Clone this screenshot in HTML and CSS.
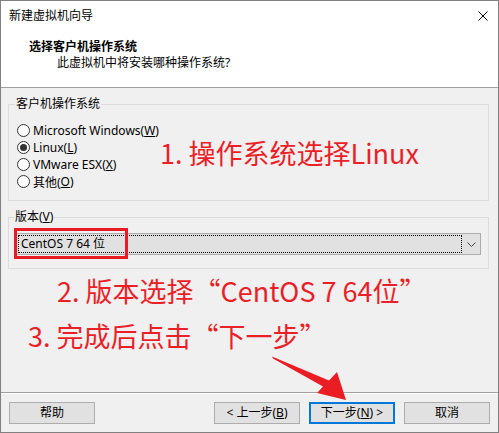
FILE: index.html
```html
<!DOCTYPE html>
<html lang="zh-CN">
<head>
<meta charset="utf-8">
<title>新建虚拟机向导</title>
<link rel="stylesheet" href="styles.css">
</head>
<body>
<div class="window">
  <div class="titlebar">
    <span class="title">新建虚拟机向导</span>
    <svg class="close" viewBox="0 0 10 10" width="10" height="10"><path d="M0.5 0.5 L9.5 9.5 M9.5 0.5 L0.5 9.5" stroke="#000" stroke-width="1" fill="none"/></svg>
  </div>
  <div class="header">
    <div class="h-title">选择客户机操作系统</div>
    <div class="h-sub">此虚拟机中将安装哪种操作系统?</div>
  </div>
  <div class="content">
    <fieldset class="group os">
      <legend>客户机操作系统</legend>
      <div class="os-row">
        <div class="radios">
          <div class="radio"><span class="dot"></span>Microsoft Windows(<u>W</u>)</div>
          <div class="radio"><span class="dot checked"></span>Linux(<u>L</u>)</div>
          <div class="radio"><span class="dot"></span>VMware ESX(<u>X</u>)</div>
          <div class="radio"><span class="dot"></span>其他(<u>O</u>)</div>
        </div>
        <div class="note note1">1. 操作系统选择Linux</div>
      </div>
    </fieldset>
    <fieldset class="group ver">
      <legend>版本(<u>V</u>)</legend>
      <div class="combo">
        <div class="combo-field">CentOS 7 64 位</div>
        <div class="combo-btn"><svg viewBox="0 0 9 5" width="9" height="5"><path d="M0.5 0.5 L4.5 4.5 L8.5 0.5" stroke="#444" stroke-width="1" fill="none"/></svg></div>
        <div class="mark"></div>
      </div>
    </fieldset>
    <div class="note note2">2. 版本选择“CentOS 7 64位”</div>
    <div class="note note3">3. 完成后点击“下一步”</div>
  </div>
  <div class="footer">
    <button class="btn">帮助</button>
    <div class="nav">
      <button class="btn">&lt; 上一步(<u>B</u>)</button>
      <button class="btn primary">下一步(<u>N</u>) &gt;</button>
      <button class="btn">取消</button>
    </div>
  </div>
  <svg class="arrow" viewBox="0 0 499 433" width="499" height="433">
    <polygon points="272,356.5 329,380.5 337,372 346,400 317,393 323,386.5 273,358.5" fill="#ea1c24"/>
  </svg>
</div>
</body>
</html>
```

FILE: styles.css
```css
* {
  box-sizing: border-box;
}

html,
body {
  margin: 0;
  padding: 0;
}

body {
  width: 499px;
  height: 433px;
  overflow: hidden;
  background: #ffffff;
  font-family: "Noto Sans", "Noto Sans CJK SC", sans-serif;
  font-size: 12px;
  color: #000000;
}

.window {
  position: relative;
  width: 499px;
  height: 433px;
  border: 1px solid #808080;
  display: flex;
  flex-direction: column;
  background: #f0f0f0;
}

.titlebar {
  height: 29px;
  flex: none;
  background: #ffffff;
  display: flex;
  align-items: center;
  justify-content: space-between;
  padding: 0 10px 0 8px;
  line-height: 16px;
}

.close {
  display: block;
}

.header {
  height: 58px;
  flex: none;
  background: #ffffff;
  border-bottom: 1px solid #a0a0a0;
  padding: 9px 0 0 28px;
  line-height: 16px;
}

.h-title {
  font-weight: bold;
}

.h-sub {
  padding-left: 28px;
}

.content {
  flex: 1;
  padding: 8px 9px 0 7px;
  display: flex;
  flex-direction: column;
}

.group {
  margin: 0;
  border: 1px solid #dcdcdc;
  min-width: 0;
}

.group legend {
  padding: 0 1px;
  margin-left: -2px;
  line-height: 16px;
}

.os {
  padding: 10px 8px 10px 8px;
}

.os-row {
  display: flex;
  align-items: flex-start;
}

.radios {
  width: 143px;
  flex: none;
}

.radio {
  display: flex;
  align-items: center;
  height: 17px;
  white-space: nowrap;
}

.dot {
  position: relative;
  width: 13px;
  height: 13px;
  flex: none;
  border: 1px solid #333333;
  border-radius: 50%;
  background: #ffffff;
  margin-right: 3px;
}

.dot.checked::after {
  content: "";
  position: absolute;
  left: 2px;
  top: 2px;
  width: 7px;
  height: 7px;
  border-radius: 50%;
  background: #333333;
}

.ver {
  margin-top: 8px;
  padding: 8px 7px 13px 7px;
}

.combo {
  position: relative;
  height: 22px;
  border: 1px solid #adadad;
  background: #e1e1e1;
  display: flex;
  align-items: stretch;
}

.combo-field {
  flex: 1;
  margin: 1px 0 1px 1px;
  border: 1px dotted #000000;
  padding-left: 2px;
  line-height: 16px;
  white-space: nowrap;
}

.combo-btn {
  width: 18px;
  flex: none;
  display: flex;
  align-items: center;
  justify-content: center;
}

.combo-btn svg {
  display: block;
}

.mark {
  position: absolute;
  left: -3px;
  top: -6px;
  width: 114px;
  height: 31px;
  border: 3px solid #e81c24;
}

.note {
  color: #ea1f28;
  font-family: "Noto Sans CJK SC", sans-serif;
  font-size: 27px;
  line-height: 36px;
  white-space: nowrap;
}

.note1 {
  margin-top: 13px;
}

.note2 {
  margin-top: 4px;
  margin-left: 49px;
}

.note3 {
  margin-top: 9px;
  margin-left: 20px;
}

.footer {
  height: 40px;
  flex: none;
  border-top: 1px solid #a0a0a0;
  box-shadow: inset 0 1px #ffffff;
  display: flex;
  justify-content: space-between;
  align-items: flex-start;
  padding: 9px 8px 0 8px;
}

.nav {
  display: flex;
  gap: 9px;
}

.btn {
  width: 86px;
  height: 22px;
  padding: 0;
  margin: 0;
  border: 1px solid #adadad;
  background: #e1e1e1;
  font-family: inherit;
  font-size: 12px;
  line-height: 18px;
  color: #000000;
}

.btn.primary {
  border: 2px solid #0078d7;
}

.arrow {
  position: absolute;
  left: -1px;
  top: -1px;
  pointer-events: none;
}
```
